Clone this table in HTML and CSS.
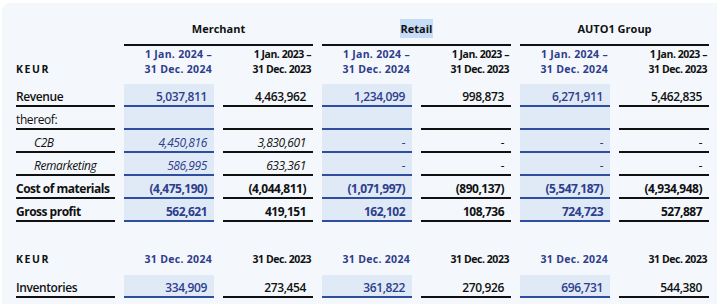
FILE: index.html
```html
<!DOCTYPE html>
<html lang="en">
<head>
    <meta charset="UTF-8">
    <meta name="viewport" content="width=device-width, initial-scale=1.0">
    <title>Segment figures</title>
    <link rel="stylesheet" href="styles.css">
</head>
<body>

    <div class="panel">

        <!-- Income statement by segment -->
        <table class="fin-table">
            <colgroup>
                <col class="col-label">
                <col class="col-num"><col class="col-num">
                <col class="col-num"><col class="col-num">
                <col class="col-num"><col class="col-num">
            </colgroup>
            <thead>
                <tr class="group-row">
                    <th></th>
                    <th colspan="2" class="group-head">Merchant</th>
                    <th colspan="2" class="group-head"><span class="selected">Retail</span></th>
                    <th colspan="2" class="group-head">AUTO1 Group</th>
                </tr>
                <tr class="period-row">
                    <th class="unit">KEUR</th>
                    <th class="period cur">1 Jan. 2024 –<br>31 Dec. 2024</th>
                    <th class="period">1 Jan. 2023 –<br>31 Dec. 2023</th>
                    <th class="period cur">1 Jan. 2024 –<br>31 Dec. 2024</th>
                    <th class="period">1 Jan. 2023 –<br>31 Dec. 2023</th>
                    <th class="period cur">1 Jan. 2024 –<br>31 Dec. 2024</th>
                    <th class="period">1 Jan. 2023 –<br>31 Dec. 2023</th>
                </tr>
            </thead>
            <tbody>
                <tr class="row-main">
                    <td class="label">Revenue</td>
                    <td class="num cur">5,037,811</td>
                    <td class="num">4,463,962</td>
                    <td class="num cur">1,234,099</td>
                    <td class="num">998,873</td>
                    <td class="num cur">6,271,911</td>
                    <td class="num">5,462,835</td>
                </tr>
                <tr>
                    <td class="label">thereof:</td>
                    <td class="num cur"></td>
                    <td class="num"></td>
                    <td class="num cur"></td>
                    <td class="num"></td>
                    <td class="num cur"></td>
                    <td class="num"></td>
                </tr>
                <tr class="row-sub">
                    <td class="label">C2B</td>
                    <td class="num cur">4,450,816</td>
                    <td class="num">3,830,601</td>
                    <td class="num cur">-</td>
                    <td class="num">-</td>
                    <td class="num cur">-</td>
                    <td class="num">-</td>
                </tr>
                <tr class="row-sub">
                    <td class="label">Remarketing</td>
                    <td class="num cur">586,995</td>
                    <td class="num">633,361</td>
                    <td class="num cur">-</td>
                    <td class="num">-</td>
                    <td class="num cur">-</td>
                    <td class="num">-</td>
                </tr>
                <tr class="row-bold">
                    <td class="label">Cost of materials</td>
                    <td class="num cur">(4,475,190)</td>
                    <td class="num">(4,044,811)</td>
                    <td class="num cur">(1,071,997)</td>
                    <td class="num">(890,137)</td>
                    <td class="num cur">(5,547,187)</td>
                    <td class="num">(4,934,948)</td>
                </tr>
                <tr class="row-bold">
                    <td class="label">Gross profit</td>
                    <td class="num cur">562,621</td>
                    <td class="num">419,151</td>
                    <td class="num cur">162,102</td>
                    <td class="num">108,736</td>
                    <td class="num cur">724,723</td>
                    <td class="num">527,887</td>
                </tr>
            </tbody>
        </table>

        <!-- Balance sheet item by segment -->
        <table class="fin-table fin-table-second">
            <colgroup>
                <col class="col-label">
                <col class="col-num"><col class="col-num">
                <col class="col-num"><col class="col-num">
                <col class="col-num"><col class="col-num">
            </colgroup>
            <thead>
                <tr class="period-row">
                    <th class="unit">KEUR</th>
                    <th class="period cur">31 Dec. 2024</th>
                    <th class="period">31 Dec. 2023</th>
                    <th class="period cur">31 Dec. 2024</th>
                    <th class="period">31 Dec. 2023</th>
                    <th class="period cur">31 Dec. 2024</th>
                    <th class="period">31 Dec. 2023</th>
                </tr>
            </thead>
            <tbody>
                <tr class="row-main">
                    <td class="label">Inventories</td>
                    <td class="num cur">334,909</td>
                    <td class="num">273,454</td>
                    <td class="num cur">361,822</td>
                    <td class="num">270,926</td>
                    <td class="num cur">696,731</td>
                    <td class="num">544,380</td>
                </tr>
            </tbody>
        </table>

    </div>

</body>
</html>
```

FILE: styles.css
```css
/* General styling */
html, body {
    overflow: hidden;
}
body {
    margin: 0;
    background-color: #fff;
    font-family: "Open Sans", "Noto Sans", sans-serif;
    color: #111;
}
.panel {
    margin: 3px 0 0 2px;
    padding: 14px 0 20px 14px;
    background-color: #f4f8fc;
    border-radius: 8px 0 0 0;
}

/* Table grid */
.fin-table {
    table-layout: fixed;
    width: 702px;
    margin-left: -9px;
    border-collapse: separate;
    border-spacing: 9px 0;
}
.fin-table-second {
    margin-top: 29px;
}
.col-label { width: 99px; }
.col-num { width: 90px; }

th, td {
    padding: 0;
}

/* Header rows */
.group-head {
    padding: 4px 0 7px;
    font-size: 11px;
    line-height: 16px;
    font-weight: 700;
    text-align: center;
    border-bottom: 2px solid #111;
}
.selected {
    background-color: #c6dcf7;
    padding: 2px 1px;
}
.period-row th {
    vertical-align: bottom;
    padding: 1px 2px 8px 0;
    font-size: 10.5px;
    line-height: 14.5px;
    font-weight: 700;
    text-align: right;
    letter-spacing: -0.45px;
}
.period-row .period.cur {
    color: #2e3d8c;
    letter-spacing: 0.3px;
}
.period-row .unit {
    text-align: left;
    letter-spacing: 1.6px;
}

/* Body rows */
tbody td {
    height: 21px;
    padding: 5px 7px 0 0;
    box-sizing: border-box;
    font-size: 12px;
    line-height: 16px;
    letter-spacing: -0.4px;
    vertical-align: bottom;
    border-bottom: 2px solid #111;
    white-space: nowrap;
}
tbody td.label {
    text-align: left;
}
tbody td.num {
    text-align: right;
}
tbody td.cur {
    background-color: #dfeaf6;
    border-bottom-color: #2f4d9f;
    color: #2e3d8c;
}
tbody tr {
    height: 23px;
}

.row-main td {
    font-weight: 600;
}
.row-bold td {
    font-weight: 700;
    letter-spacing: -0.5px;
}
.row-sub td {
    font-style: italic;
}
.row-sub td.label {
    padding-left: 18px;
}
```
